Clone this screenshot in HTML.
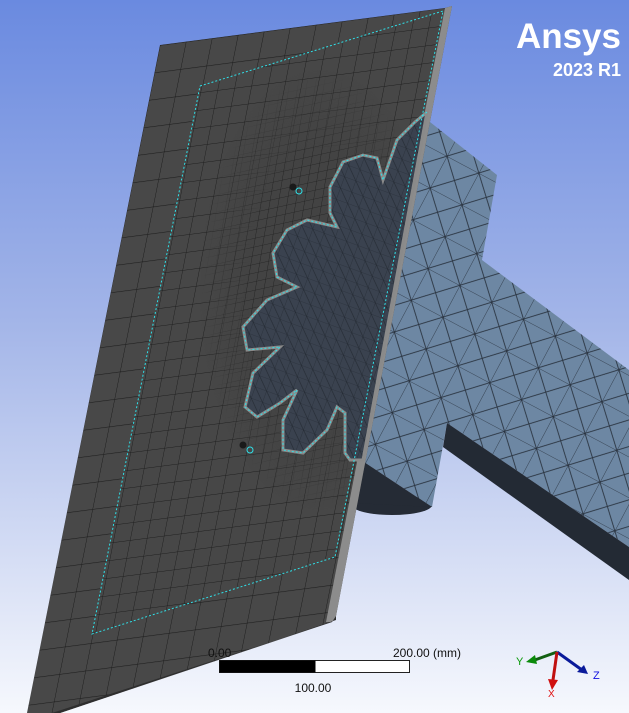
<!DOCTYPE html>
<html><head><meta charset="utf-8"><style>
html,body{margin:0;padding:0;width:629px;height:713px;overflow:hidden}
svg{display:block}
text{font-family:"Liberation Sans",sans-serif}
</style></head><body>
<svg width="629" height="713" viewBox="0 0 629 713" xmlns="http://www.w3.org/2000/svg">
<defs>
<linearGradient id="bg" x1="0" y1="0" x2="0" y2="1">
<stop offset="0" stop-color="#6a8ae0"/><stop offset="0.45" stop-color="#a3b5e8"/><stop offset="1" stop-color="#f6f8fd"/>
</linearGradient>
<pattern id="grid" width="10" height="10" patternUnits="userSpaceOnUse" patternTransform="matrix(2.6,-0.34,-0.55,2.75,160,45)">
<rect width="10" height="10" fill="#484848"/>
<path d="M0 0H10M0 0V10" stroke="#1e1e1e" stroke-width="0.4" fill="none"/>
</pattern>
<pattern id="mid" width="10" height="10" patternUnits="userSpaceOnUse" patternTransform="matrix(1.7,-0.22,-0.35,1.8,160,45)">
<rect width="10" height="10" fill="#474747"/>
<path d="M0 0H10M0 0V10" stroke="#1e1e1e" stroke-width="0.55" fill="none"/>
</pattern>
<pattern id="fine" width="10" height="10" patternUnits="userSpaceOnUse" patternTransform="matrix(0.9,-0.2,-0.15,0.9,0,0)">
<rect width="10" height="10" fill="#434343"/>
<path d="M0 0H10M0 0V10" stroke="#1e1e1e" stroke-width="0.9" fill="none"/>
</pattern>
<radialGradient id="fade"><stop offset="0.6" stop-color="#fff"/><stop offset="1" stop-color="#000"/></radialGradient>
<mask id="fm"><ellipse cx="320" cy="290" rx="120" ry="220" fill="url(#fade)"/></mask>
<pattern id="tri" width="36" height="36" patternUnits="userSpaceOnUse" patternTransform="rotate(28)">
<rect width="36" height="36" fill="#6d87a3"/>
<path d="M0 0H36M0 0V36M0 0L36 36M36 0L0 36" stroke="#27303c" stroke-width="0.8" fill="none"/>
</pattern>
<pattern id="tri2" width="12" height="12" patternUnits="userSpaceOnUse" patternTransform="rotate(20)">
<rect width="12" height="12" fill="#3a424f"/>
<path d="M0 0H12M0 0V12M0 0L12 12" stroke="#222830" stroke-width="0.6" fill="none"/>
</pattern>
<clipPath id="inner"><polygon points="200,86 443,11 335,557 92,634"/></clipPath>
</defs>
<rect width="629" height="713" fill="url(#bg)"/>
<ellipse cx="392" cy="505" rx="40" ry="10" fill="#252b35"/>
<polygon points="380,110 430,122 497,175 482,260 629,370 629,547 447,423 432,507 358,458 360,110" fill="url(#tri)"/>
<polygon points="447,423 629,547 629,580 443,447" fill="#232a34"/>
<polygon points="358,458 432,507 353,503" fill="#252b35"/>
<polygon points="160,45 445,8 452,6 336,616 332,622 60,713 27,713" fill="url(#grid)"/>
<g clip-path="url(#inner)">
<rect x="0" y="0" width="629" height="713" fill="url(#mid)"/>
<rect x="0" y="0" width="629" height="713" fill="url(#fine)" mask="url(#fm)"/>
</g>
<polygon points="445,8 452,6 336,616 332,622 326,622" fill="#8c8c8c"/>
<polygon points="332,622 336,616 336,620 60,713 52,713" fill="#2e2e2e"/>
<polygon points="427,112 415,122 397,140 383,180 377,158 363,155 343,162 330,187 330,213 337,227 307,220 287,230 273,253 277,277 297,287 267,300 243,327 247,350 280,347 253,373 245,407 257,417 280,403 297,390 283,420 283,450 303,453 327,430 337,407 345,413 345,453 350,460 363,460" fill="url(#tri2)" stroke="#8a8a8a" stroke-width="3"/>
<polyline points="427,112 415,122 397,140 383,180 377,158 363,155 343,162 330,187 330,213 337,227 307,220 287,230 273,253 277,277 297,287 267,300 243,327 247,350 280,347 253,373 245,407 257,417 280,403 297,390 283,420 283,450 303,453 327,430 337,407 345,413 345,453 350,460" fill="none" stroke="#2fe0e8" stroke-width="1" stroke-dasharray="2,2"/>
<polyline points="200,86 443,11 335,557 92,634 200,86" fill="none" stroke="#2fe0e8" stroke-width="1" stroke-dasharray="2,2"/>
<circle cx="299" cy="191" r="3" fill="none" stroke="#2fe0e8"/>
<circle cx="250" cy="450" r="3" fill="none" stroke="#2fe0e8"/>
<circle cx="293" cy="187" r="3.5" fill="#1a1a1a"/>
<circle cx="243" cy="445" r="3.5" fill="#1a1a1a"/>
<text x="621" y="48" text-anchor="end" font-size="35" font-weight="bold" fill="#fff">Ansys</text>
<text x="621" y="76" text-anchor="end" font-size="18" font-weight="bold" fill="#fff">2023 R1</text>
<text x="208" y="657" font-size="12" fill="#111">0.00</text>
<text x="393" y="657" font-size="12" fill="#111">200.00 (mm)</text>
<rect x="219.5" y="660.5" width="190" height="12" fill="#fff" stroke="#222"/>
<rect x="219.5" y="660.5" width="96" height="12" fill="#000"/>
<text x="313" y="692" font-size="12" text-anchor="middle" fill="#111">100.00</text>
<line x1="557" y1="652" x2="532" y2="661" stroke="#126012" stroke-width="3"/>
<polygon points="526,662 535,655 537,664" fill="#0a8a0a"/>
<line x1="557" y1="652" x2="582" y2="670" stroke="#0a1a9a" stroke-width="3"/>
<polygon points="588,674 577,672 584,665" fill="#0a1a9a"/>
<line x1="557" y1="652" x2="553" y2="680" stroke="#c01010" stroke-width="3"/>
<polygon points="552,690 548,679 558,680" fill="#d01010"/>
<text x="516" y="665" font-size="11" fill="#0a9a0a">Y</text>
<text x="593" y="679" font-size="11" fill="#1010e0">Z</text>
<text x="548" y="697" font-size="10" fill="#e01010">X</text>
</svg>
</body></html>
